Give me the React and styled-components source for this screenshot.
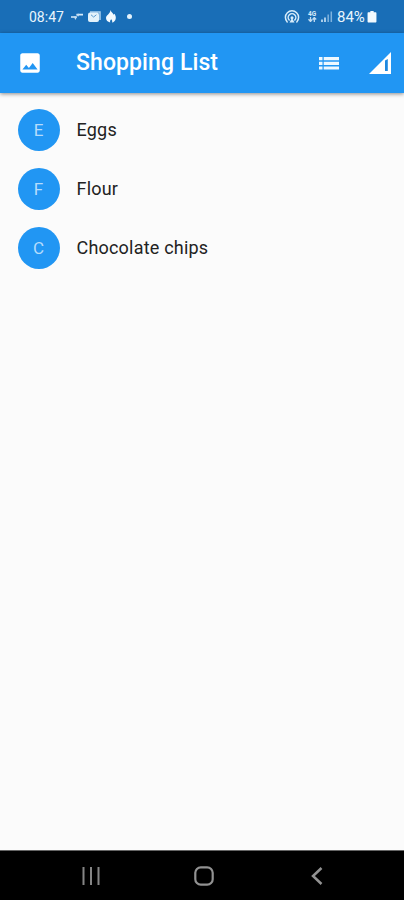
import styled, { createGlobalStyle } from "styled-components";

const ITEMS = ["Eggs", "Flour", "Chocolate chips"];

function StatusBar() {
  return (
    <Status>
      <StatusGroup>
        <StatusText $width={36}>08:47</StatusText>
        <StatusIcon $left={6} width="12" height="12" viewBox="0 0 12 12">
          <path d="M0 6h5.500M5.500 3.700H12" fill="none" stroke="#d7ecfa" strokeWidth="1.700" />
          <path d="M3 5.500h3.500L4.200 9ZM5 4l2.500-1.500L8 5.500Z" fill="#c2ddf2" />
        </StatusIcon>
        <StatusIcon $left={4} width="14" height="12" viewBox="0 0 14 12">
          <path d="M3 1h10v8" fill="none" stroke="#a9cfee" strokeWidth="1.5" />
          <rect x="1" y="1.5" width="11" height="9.500" rx="2" fill="#e3f2fb" />
          <path d="m4 3.800 2.600 2.200 2.800-2.200" fill="none" stroke="#5b9bd1" strokeWidth="1" />
        </StatusIcon>
        <StatusIcon $left={4} width="12" height="13" viewBox="0 0 12 13">
          <path
            d="M5.600 0C6 2.300 8 3 8.600 4.700l.800-1c1 1.400 1.600 2.800 1.400 4.600C10.600 11 8.600 12.400 7 12.600c.500-1.300.200-2.400-.800-3.400C5.200 10.200 4.800 11.300 5.200 12.600 2.700 12 1 10.400 1 8.100 1 5 5.200 4 5.600 0Z"
            fill="#f2faff"
          />
        </StatusIcon>
        <StatusIcon $left={10} width="5" height="5" viewBox="0 0 5 5">
          <circle cx="2.500" cy="2.500" r="2.500" fill="#e3f2fb" />
        </StatusIcon>
      </StatusGroup>
      <StatusGroup>
        <StatusIcon width="16" height="14" viewBox="0 0 16 14">
          <g fill="none" stroke="#d7ecfa" strokeWidth="1.500" strokeLinecap="round">
            <path d="M3.200 12a6.600 6.600 0 1 1 9.600 0" />
            <path d="M5.200 10a3.800 3.800 0 1 1 5.600 0" />
          </g>
          <circle cx="8" cy="7.700" r="1.500" fill="#d7ecfa" />
          <path d="M8 8 5.500 12.500h5Z" fill="#d7ecfa" />
        </StatusIcon>
        <Network>
          <span>4G</span>
          <svg width="9" height="5" viewBox="0 0 9 5">
            <path d="M2.500 0v4M.500 2.300l2 2.200 1.700-2M6.300 5V1M4.600 2.500l1.700-2 1.900 2" fill="none" stroke="#c2ddf2" strokeWidth="1.300" />
          </svg>
        </Network>
        <StatusIcon $left={3} width="12" height="11" viewBox="0 0 12 11">
          <path d="M1 8.500V11M4 6.500V11" stroke="#d7ecfa" strokeWidth="1.500" />
          <path d="M7.200 3.500V11M10.300.500V11" stroke="#7fb3de" strokeWidth="1.500" />
        </StatusIcon>
        <StatusText $left={4} $width={30} $size={15}>84%</StatusText>
        <StatusIcon width="10" height="12" viewBox="0 0 9 12" preserveAspectRatio="none">
          <path d="M3 0h3v1.300h1.500c.700 0 1 .400 1 1v8.200c0 .700-.300 1-1 1h-6c-.700 0-1-.300-1-1V2.300c0-.600.300-1 1-1H3Z" fill="#f2faff" />
        </StatusIcon>
      </StatusGroup>
    </Status>
  );
}

function App() {
  return (
    <>
      <GlobalStyle />
      <Screen>
        <StatusBar />
        <AppBar>
          <svg width="26" height="26" viewBox="0 0 24 24">
            <path
              d="M21 19V5c0-1.100-.900-2-2-2H5c-1.100 0-2 .900-2 2v14c0 1.100.900 2 2 2h14c1.100 0 2-.900 2-2zM8.500 13.500l2.500 3.010L14.500 12l4.500 6H5l3.500-4.500z"
              fill="#fff"
            />
          </svg>
          <Title>Shopping List</Title>
          <Actions>
            <svg width="20" height="13" viewBox="0 0 20 13">
              <path d="M0 0h3.500v3.200H0zM4.700 0H20v3.200H4.700zM0 4.700h3.500v3.200H0zM4.700 4.700H20v3.200H4.700zM0 9.400h3.500v3.200H0zM4.700 9.400H20v3.200H4.700z" fill="#edf8ff" />
            </svg>
            <svg width="22" height="22" viewBox="0 0 22 22">
              <path d="M22 0v22H0Z" fill="#fff" />
              <path d="M16 8.500 18.800 7V19H16Z" fill="#1e88df" />
            </svg>
          </Actions>
        </AppBar>
        <List>
          {ITEMS.map((name) => (
            <Item key={name}>
              <Avatar>{name[0]}</Avatar>
              <ItemName>{name}</ItemName>
            </Item>
          ))}
        </List>
        <NavBar>
          <svg width="18" height="18" viewBox="0 0 18 18">
            <path d="M1.500 0v18M9 0v18M16.500 0v18" stroke="#858585" strokeWidth="2" />
          </svg>
          <HomeIcon width="20" height="20" viewBox="0 0 20 20">
            <rect x="1.300" y="1.300" width="17.400" height="17.400" rx="5.500" fill="none" stroke="#929292" strokeWidth="2.200" />
          </HomeIcon>
          <svg width="12" height="18" viewBox="0 0 12 18">
            <path d="M10.500 1 2 9l8.500 8" fill="none" stroke="#929292" strokeWidth="2.500" />
          </svg>
        </NavBar>
      </Screen>
    </>
  );
}

export default App;

const GlobalStyle = createGlobalStyle`
  * {
    box-sizing: border-box;
  }

  body {
    margin: 0;
    font-family: Roboto, "Liberation Sans", sans-serif;
  }

  svg {
    display: block;
    flex-shrink: 0;
  }
`;

const Screen = styled.div`
  height: 100vh;

  background-color: #fbfbfb;

  display: flex;
  flex-direction: column;
`;

const Status = styled.div`
  height: 33px;
  padding: 0 27px 0 29px;

  background-color: #196eb7;

  display: flex;
  justify-content: space-between;
  align-items: center;
`;

const StatusGroup = styled.div`
  display: flex;
  align-items: center;
`;

const StatusText = styled.span`
  width: ${({ $width }) => $width}px;
  margin-left: ${({ $left = 0 }) => $left}px;

  font-size: ${({ $size = 14 }) => $size}px;
  line-height: 16px;
  white-space: nowrap;
  color: #e8f5fd;
`;

const StatusIcon = styled.svg`
  margin-left: ${({ $left = 0 }) => $left}px;
`;

const Network = styled.div`
  width: 10px;
  margin-left: 8px;

  font-size: 6.5px;
  font-weight: 700;
  line-height: 6px;
  color: #d7ecfa;

  display: flex;
  flex-direction: column;
`;

const AppBar = styled.header`
  height: 60px;
  padding: 0 13px 0 17px;

  background-color: #2196f3;
  box-shadow: 0 1px 4px rgba(0, 0, 0, 0.45);

  display: flex;
  align-items: center;
`;

const Title = styled.h1`
  margin: 0 0 0 33px;

  font-size: 23px;
  font-weight: 500;
  line-height: 28px;
  letter-spacing: 0.1px;
  color: #fff;
`;

const Actions = styled.div`
  margin-left: auto;

  display: flex;
  align-items: center;
  gap: 30px;
`;

const List = styled.ul`
  margin: 0;
  padding: 7px 0 0;

  list-style: none;

  flex: 1;
`;

const Item = styled.li`
  height: 59px;
  padding-left: 17.5px;

  display: flex;
  align-items: center;
`;

const Avatar = styled.div`
  width: 42px;
  height: 42px;

  border-radius: 50%;

  background-color: #2196f3;

  font-size: 17px;
  color: #b5dcfb;

  display: flex;
  justify-content: center;
  align-items: center;
`;

const ItemName = styled.span`
  margin-left: 17px;

  font-size: 18px;
  line-height: 24px;
  letter-spacing: 0.2px;
  color: #222;
`;

const NavBar = styled.nav`
  height: 50px;
  padding: 1px 81px 0 82px;
  border-top: 1px solid #666;

  background-color: #000;

  display: grid;
  grid-template-columns: 18px 1fr 12px;
  align-items: center;
`;

const HomeIcon = styled.svg`
  margin-left: 94px;
`;
